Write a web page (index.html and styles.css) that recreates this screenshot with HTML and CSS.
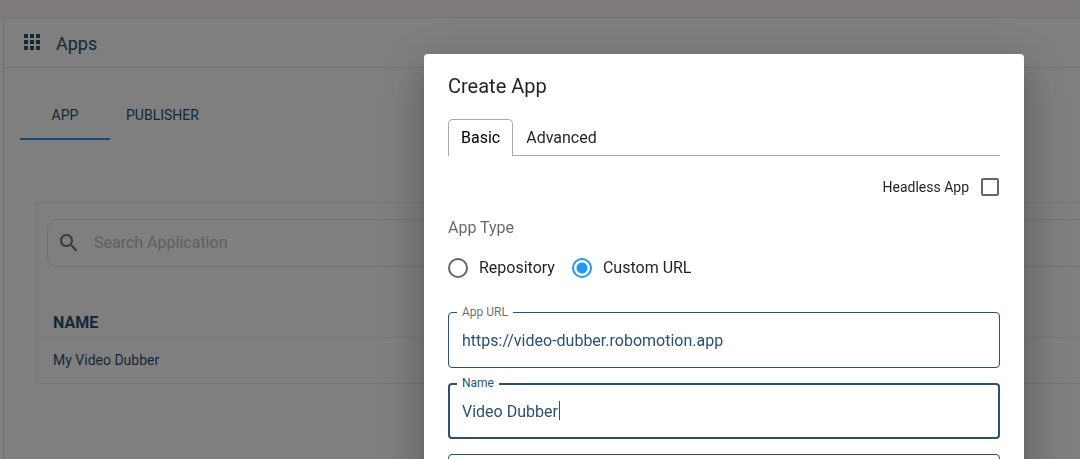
FILE: index.html
```html
<!DOCTYPE html>
<html lang="en">
<head>
    <meta charset="UTF-8">
    <meta name="viewport" content="width=device-width, initial-scale=1.0">
    <title>Apps</title>
    <link rel="stylesheet" href="styles.css">
</head>
<body>
    <div class="topbar"></div>

    <div class="page">
        <header class="page-header">
            <svg class="apps-icon" viewBox="0 0 24 24" aria-hidden="true">
                <path d="M4 8h4V4H4v4zm6 12h4v-4h-4v4zm-6 0h4v-4H4v4zm0-6h4v-4H4v4zm6 0h4v-4h-4v4zm6-10v4h4V4h-4zm-6 4h4V4h-4v4zm6 6h4v-4h-4v4zm0 6h4v-4h-4v4z"/>
            </svg>
            <h1>Apps</h1>
        </header>

        <nav class="page-tabs">
            <button type="button" class="page-tab active">APP</button>
            <button type="button" class="page-tab">PUBLISHER</button>
        </nav>

        <main class="panel">
            <label class="search">
                <svg class="search-icon" viewBox="0 0 24 24" aria-hidden="true">
                    <path d="M15.5 14h-.79l-.28-.27C15.41 12.59 16 11.11 16 9.5 16 5.91 13.09 3 9.5 3S3 5.91 3 9.5 5.91 16 9.5 16c1.61 0 3.09-.59 4.23-1.57l.27.28v.79l5 4.99L20.49 19l-4.99-5zm-6 0C7.01 14 5 11.99 5 9.5S7.01 5 9.5 5 14 7.01 14 9.5 11.99 14 9.5 14z"/>
                </svg>
                <input type="text" placeholder="Search Application" aria-label="Search Application">
            </label>
            <table>
                <thead>
                    <tr>
                        <th>NAME</th>
                    </tr>
                </thead>
                <tbody>
                    <tr>
                        <td>My Video Dubber</td>
                    </tr>
                </tbody>
            </table>
        </main>
    </div>

    <!-- Create app dialog -->
    <div class="overlay">
        <form class="dialog" role="dialog" aria-labelledby="dialog-title">
            <h2 id="dialog-title">Create App</h2>

            <div class="tab-list" role="tablist">
                <button type="button" class="tab selected" role="tab" aria-selected="true">Basic</button>
                <button type="button" class="tab" role="tab" aria-selected="false">Advanced</button>
            </div>

            <div class="headless">
                <label for="headless">Headless App</label>
                <input type="checkbox" id="headless">
            </div>

            <p class="group-label" id="type-label">App Type</p>
            <div class="radios" role="radiogroup" aria-labelledby="type-label">
                <label><input type="radio" name="type" value="repository">Repository</label>
                <label><input type="radio" name="type" value="url" checked>Custom URL</label>
            </div>

            <div class="fields">
                <div class="field">
                    <label for="url">App URL</label>
                    <input type="text" id="url" value="https://video-dubber.robomotion.app">
                </div>
                <div class="field focused">
                    <label for="name">Name</label>
                    <input type="text" id="name" value="Video Dubber">
                    <span class="caret"></span>
                </div>
                <div class="field">
                    <input type="text" id="description" aria-label="Description">
                </div>
            </div>
        </form>
    </div>
</body>
</html>
```
FILE: styles.css
```css
* {
    box-sizing: border-box;
}

body {
    font-family: Roboto, Arial, sans-serif;
    font-size: 16px;
    line-height: 24px;
    color: #2d4f71;
    background-color: #fff;
    margin: 0;
    height: 100vh;
    overflow: hidden;
    display: flex;
    flex-direction: column;
}

button,
input {
    font: inherit;
    color: inherit;
}

.topbar {
    height: 17px;
    flex-shrink: 0;
    background-color: #fdf4f6;
}

/* Page behind the dialog */
.page {
    flex: 1;
    margin-left: 3px;
    border-top: 1px solid #e6e2e3;
    border-left: 1px solid #e6dfe1;
}

.page-header {
    display: flex;
    align-items: center;
    gap: 12px;
    height: 50px;
    padding: 0 16px 2px;
    border-bottom: 1px solid #e4e2e3;
}

.page-header h1 {
    font-size: 18px;
    font-weight: 400;
    margin: 0;
    padding-top: 4px;
}

.apps-icon {
    width: 24px;
    height: 24px;
    fill: #2d4f71;
}

.page-tabs {
    display: flex;
    padding: 24px 16px 0;
}

.page-tab {
    min-width: 90px;
    height: 48px;
    padding: 0 16px;
    border: none;
    border-bottom: 2px solid transparent;
    background: none;
    font-size: 14px;
    cursor: pointer;
}

.page-tab.active {
    border-bottom-color: #2196f3;
}

/* Runs on to the right edge */
.panel {
    margin: 62px 0 0 32px;
    padding: 16px 0 0 10px;
    border: 1px solid #e6e6e6;
    border-right: none;
    border-radius: 4px 0 0 4px;
}

.search {
    display: flex;
    align-items: center;
    gap: 13px;
    height: 48px;
    padding: 0 9px;
    border: 1px solid #e0e0e0;
    border-right: none;
    border-radius: 10px 0 0 10px;
}

.search-icon {
    width: 24px;
    height: 24px;
    fill: #6c757d;
}

.search input {
    flex: 1;
    padding: 0;
    border: none;
    outline: none;
    background: none;
}

.search input::placeholder {
    color: #bdbdbd;
    opacity: 1;
}

table {
    width: calc(100% + 10px);
    margin: 39px 0 0 -10px;
    border-collapse: collapse;
}

th,
td {
    padding: 5px 16px 2px;
    text-align: left;
}

th {
    font-weight: 700;
    border-bottom: 1px solid #ececec;
}

td {
    height: 45px;
    padding: 0 16px;
    font-size: 14px;
}

/* Dialog */
.overlay {
    position: fixed;
    top: 0;
    right: 0;
    bottom: 0;
    left: 0;
    display: flex;
    align-items: flex-start;
    justify-content: flex-end;
    padding: 54px 56px 0 32px;
    overflow: hidden;
    background-color: rgba(0, 0, 0, 0.5);
}

.dialog {
    width: 100%;
    max-width: 600px;
    padding: 16px 24px 64px;
    border-radius: 4px;
    background-color: #fff;
    color: rgba(0, 0, 0, 0.87);
    box-shadow: 0 11px 15px -7px rgba(0, 0, 0, 0.2),
                0 24px 38px 3px rgba(0, 0, 0, 0.14),
                0 9px 46px 8px rgba(0, 0, 0, 0.12);
}

.dialog h2 {
    font-size: 20px;
    font-weight: 400;
    line-height: 32px;
    margin: 0 0 17px;
}

.tab-list {
    display: flex;
    border-bottom: 1px solid #aaa;
}

.tab {
    padding: 6px 12px;
    margin-bottom: -1px;
    border: 1px solid transparent;
    border-bottom: none;
    background: none;
    cursor: pointer;
}

.tab.selected {
    border-color: #aaa;
    border-radius: 5px 5px 0 0;
    background-color: #fff;
    color: #000;
}

.headless {
    display: flex;
    align-items: center;
    justify-content: flex-end;
    gap: 12px;
    margin-top: 19px;
    padding-right: 1px;
    font-size: 14px;
}

input[type="checkbox"],
input[type="radio"] {
    appearance: none;
    margin: 0;
    border: 2px solid #666;
}

input[type="checkbox"] {
    width: 18px;
    height: 18px;
    border-radius: 2px;
}

input[type="radio"] {
    width: 20px;
    height: 20px;
    border-radius: 50%;
}

input[type="radio"]:checked {
    border-color: #2196f3;
    background: radial-gradient(circle, #2196f3 5px, transparent 6px);
}

.group-label {
    margin: 17px 0 16px;
    color: rgba(0, 0, 0, 0.6);
}

.radios {
    display: flex;
    gap: 17px;
}

.radios label {
    display: flex;
    align-items: center;
    gap: 11px;
}

.fields {
    display: flex;
    flex-direction: column;
    gap: 15px;
    margin-top: 32px;
    color: #2d4f71;
}

.field {
    position: relative;
}

.field label {
    position: absolute;
    top: -8px;
    left: 9px;
    padding: 0 5px;
    background-color: #fff;
    color: rgba(0, 0, 0, 0.6);
    font-size: 12px;
    line-height: 16px;
}

.field input {
    display: block;
    width: 100%;
    height: 56px;
    padding: 0 13px;
    border: 1px solid #2d4f71;
    border-radius: 4px;
    outline: none;
    background: none;
}

.field.focused label {
    color: #2d4f71;
}

.field.focused input {
    padding: 0 12px;
    border-width: 2px;
}

.caret {
    position: absolute;
    top: 18px;
    left: 111px;
    width: 1px;
    height: 19px;
    background-color: #2d4f71;
}
```
